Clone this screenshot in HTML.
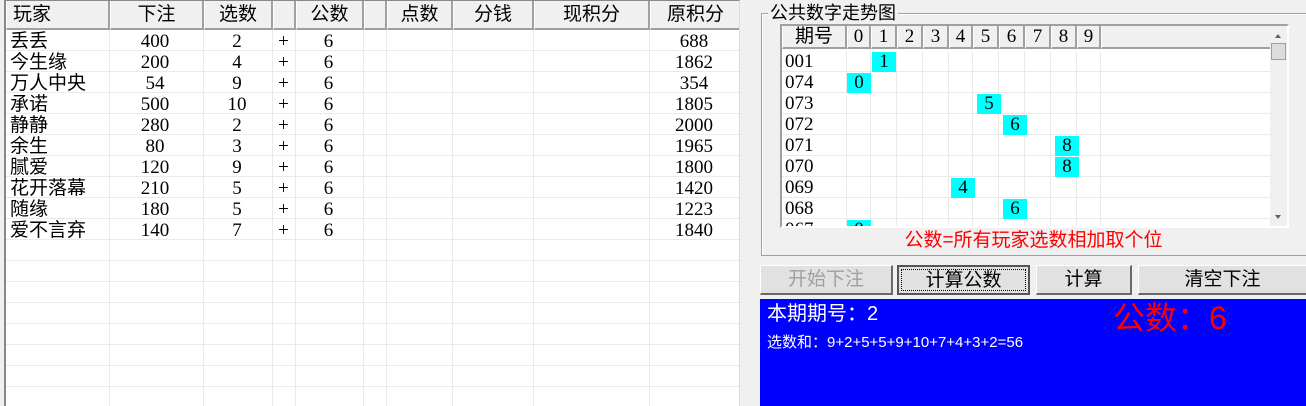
<!DOCTYPE html>
<html><head><meta charset="utf-8">
<style>
*{margin:0;padding:0;box-sizing:border-box}
body{width:1306px;height:406px;overflow:hidden;background:#f0f0f0;position:relative;font-family:"Liberation Serif","Noto Serif CJK SC",serif;color:#000}
.a{position:absolute}
.cn{font-family:"Liberation Sans","Noto Sans CJK SC",sans-serif}
#lv{left:4px;top:0;width:736px;height:406px;background:#fff;border-left:2px solid #888;border-top:1px solid #888;border-right:1px solid #ddd;overflow:hidden}
.hd{position:absolute;top:0;height:29px;background:#f0f0f0;border-right:2px solid #a0a0a0;border-bottom:2px solid #a0a0a0;border-left:1px solid #fff;font-size:19px;line-height:27px;text-align:center}
.vl{position:absolute;top:29px;bottom:0;width:1px;background:#eaeaea}
.grid{position:absolute;left:0;right:0;top:29px;bottom:0;background:repeating-linear-gradient(to bottom,transparent 0,transparent 20px,#eaeaea 20px,#eaeaea 21px)}
.r{position:absolute;height:21px;font-size:19px;line-height:21px;white-space:nowrap}
.c{position:absolute;text-align:center;white-space:nowrap}
.r .cn{font-size:19px}
#ch{left:780px;top:24px;width:509px;height:204px;background:#fff;border:2px solid #a0a0a0;border-right-color:#fff;border-bottom-color:#fff;overflow:hidden}
.ch{position:absolute;top:0;height:23px;background:#f0f0f0;border-right:2px solid #a0a0a0;border-bottom:2px solid #a0a0a0;border-left:1px solid #fff;font-size:19px;line-height:22px;text-align:center}
.cy{position:absolute;background:#00ffff;width:24px;height:20px;text-align:center;font-size:19px;line-height:20px}
.btn{position:absolute;top:265px;height:30px;background:#e1e1e1;border:1px solid #fff;border-right:2px solid #696969;border-bottom:2px solid #696969;font-size:19px;text-align:center;line-height:27px}
</style></head><body>
<div id="lv" class="a">
<div class="grid"></div>
<div class="vl" style="left:103px"></div><div class="vl" style="left:197px"></div><div class="vl" style="left:266px"></div><div class="vl" style="left:289px"></div><div class="vl" style="left:357px"></div><div class="vl" style="left:380px"></div><div class="vl" style="left:446px"></div><div class="vl" style="left:527px"></div><div class="vl" style="left:643px"></div>
<div class="hd cn" style="left:0;width:104px;text-align:left;padding-left:6px">玩家</div>
<div class="hd cn" style="left:104px;width:94px">下注</div>
<div class="hd cn" style="left:198px;width:69px">选数</div>
<div class="hd" style="left:267px;width:23px"></div>
<div class="hd cn" style="left:290px;width:68px">公数</div>
<div class="hd" style="left:358px;width:23px"></div>
<div class="hd cn" style="left:381px;width:66px">点数</div>
<div class="hd cn" style="left:447px;width:81px">分钱</div>
<div class="hd cn" style="left:528px;width:116px">现积分</div>
<div class="hd cn" style="left:644px;width:92px">原积分</div>
</div>
<div class="a" style="left:0;top:31px;width:740px">
<div class="r" style="top:0"><span class="c cn" style="left:10px">丢丢</span><span class="c" style="left:108px;width:94px">400</span><span class="c" style="left:202px;width:70px">2</span><span class="c" style="left:272px;width:23px">+</span><span class="c" style="left:295px;width:67px">6</span><span class="c" style="left:649px;width:90px">688</span></div>
<div class="r" style="top:21px"><span class="c cn" style="left:10px">今生缘</span><span class="c" style="left:108px;width:94px">200</span><span class="c" style="left:202px;width:70px">4</span><span class="c" style="left:272px;width:23px">+</span><span class="c" style="left:295px;width:67px">6</span><span class="c" style="left:649px;width:90px">1862</span></div>
<div class="r" style="top:42px"><span class="c cn" style="left:10px">万人中央</span><span class="c" style="left:108px;width:94px">54</span><span class="c" style="left:202px;width:70px">9</span><span class="c" style="left:272px;width:23px">+</span><span class="c" style="left:295px;width:67px">6</span><span class="c" style="left:649px;width:90px">354</span></div>
<div class="r" style="top:63px"><span class="c cn" style="left:10px">承诺</span><span class="c" style="left:108px;width:94px">500</span><span class="c" style="left:202px;width:70px">10</span><span class="c" style="left:272px;width:23px">+</span><span class="c" style="left:295px;width:67px">6</span><span class="c" style="left:649px;width:90px">1805</span></div>
<div class="r" style="top:84px"><span class="c cn" style="left:10px">静静</span><span class="c" style="left:108px;width:94px">280</span><span class="c" style="left:202px;width:70px">2</span><span class="c" style="left:272px;width:23px">+</span><span class="c" style="left:295px;width:67px">6</span><span class="c" style="left:649px;width:90px">2000</span></div>
<div class="r" style="top:105px"><span class="c cn" style="left:10px">余生</span><span class="c" style="left:108px;width:94px">80</span><span class="c" style="left:202px;width:70px">3</span><span class="c" style="left:272px;width:23px">+</span><span class="c" style="left:295px;width:67px">6</span><span class="c" style="left:649px;width:90px">1965</span></div>
<div class="r" style="top:126px"><span class="c cn" style="left:10px">腻爱</span><span class="c" style="left:108px;width:94px">120</span><span class="c" style="left:202px;width:70px">9</span><span class="c" style="left:272px;width:23px">+</span><span class="c" style="left:295px;width:67px">6</span><span class="c" style="left:649px;width:90px">1800</span></div>
<div class="r" style="top:147px"><span class="c cn" style="left:10px">花开落幕</span><span class="c" style="left:108px;width:94px">210</span><span class="c" style="left:202px;width:70px">5</span><span class="c" style="left:272px;width:23px">+</span><span class="c" style="left:295px;width:67px">6</span><span class="c" style="left:649px;width:90px">1420</span></div>
<div class="r" style="top:168px"><span class="c cn" style="left:10px">随缘</span><span class="c" style="left:108px;width:94px">180</span><span class="c" style="left:202px;width:70px">5</span><span class="c" style="left:272px;width:23px">+</span><span class="c" style="left:295px;width:67px">6</span><span class="c" style="left:649px;width:90px">1223</span></div>
<div class="r" style="top:189px"><span class="c cn" style="left:10px">爱不言弃</span><span class="c" style="left:108px;width:94px">140</span><span class="c" style="left:202px;width:70px">7</span><span class="c" style="left:272px;width:23px">+</span><span class="c" style="left:295px;width:67px">6</span><span class="c" style="left:649px;width:90px">1840</span></div>
</div>

<div class="a" style="left:761px;top:13px;width:545px;height:243px;border:1px solid #a0a0a0;border-right:none;box-shadow:inset 1px 1px 0 #fff"></div>
<div class="a cn" style="left:768px;top:2px;background:#f0f0f0;padding:0 2px;font-size:18px;line-height:22px">公共数字走势图</div>

<div id="ch" class="a">
<div class="grid" style="top:25px"></div>
<div class="vl" style="left:64px;top:25px"></div><div class="vl" style="left:88px;top:25px"></div><div class="vl" style="left:114px;top:25px"></div><div class="vl" style="left:140px;top:25px"></div><div class="vl" style="left:166px;top:25px"></div><div class="vl" style="left:190px;top:25px"></div><div class="vl" style="left:216px;top:25px"></div><div class="vl" style="left:242px;top:25px"></div><div class="vl" style="left:268px;top:25px"></div><div class="vl" style="left:294px;top:25px"></div><div class="vl" style="left:318px;top:25px"></div>
<div class="ch cn" style="left:0;width:65px">期号</div>
<div class="ch" style="left:65px;width:24px">0</div><div class="ch" style="left:89px;width:26px">1</div><div class="ch" style="left:115px;width:26px">2</div><div class="ch" style="left:141px;width:26px">3</div><div class="ch" style="left:167px;width:24px">4</div><div class="ch" style="left:191px;width:26px">5</div><div class="ch" style="left:217px;width:26px">6</div><div class="ch" style="left:243px;width:26px">7</div><div class="ch" style="left:269px;width:26px">8</div><div class="ch" style="left:295px;width:24px">9</div>
<div class="ch" style="left:319px;width:170px;border-right:none"></div>
<div class="a" style="left:3px;top:25px;font-size:19px;line-height:21px">001<br>074<br>073<br>072<br>071<br>070<br>069<br>068<br>067</div>
<div class="cy" style="left:90px;top:26px">1</div>
<div class="cy" style="left:65px;top:47px">0</div>
<div class="cy" style="left:195px;top:68px">5</div>
<div class="cy" style="left:221px;top:89px">6</div>
<div class="cy" style="left:273px;top:110px">8</div>
<div class="cy" style="left:273px;top:131px">8</div>
<div class="cy" style="left:169px;top:152px">4</div>
<div class="cy" style="left:221px;top:173px">6</div>
<div class="cy" style="left:65px;top:194px">0</div>
<div class="a" style="left:488px;top:0;width:17px;height:202px;background:#f0f0f0">
<div class="a" style="left:5px;top:8px;width:0;height:0;border:3px solid transparent;border-bottom:4px solid #606060;border-top:none"></div>
<div class="a" style="left:1px;top:17px;width:15px;height:17px;background:#dcdcdc;border:1px solid #a0a0a0"></div>
<div class="a" style="left:5px;top:189px;width:0;height:0;border:3px solid transparent;border-top:4px solid #606060;border-bottom:none"></div>
</div>
</div>
<div class="a cn" style="left:761px;top:230px;width:545px;text-align:center;color:#ff0000;font-size:19px;line-height:22px">公数=所有玩家选数相加取个位</div>

<div class="btn cn" style="left:760px;width:133px;color:#a0a0a0">开始下注</div>
<div class="btn cn" style="left:897px;width:133px;border:2px solid #555;outline:1px dotted #000;outline-offset:-5px">计算公数</div>
<div class="btn cn" style="left:1036px;width:96px">计算</div>
<div class="btn cn" style="left:1138px;width:170px">清空下注</div>

<div class="a" style="left:760px;top:299px;width:546px;height:107px;background:#0000ff">
<div class="a cn" style="left:7px;top:1px;color:#fff;font-size:20px;line-height:28px">本期期号：2</div>
<div class="a cn" style="left:7px;top:33px;color:#fff;font-size:15px;line-height:22px">选数和：9+2+5+5+9+10+7+4+3+2=56</div>
<div class="a cn" style="left:353px;top:0px;color:#ff0000;font-size:32px;line-height:38px">公数：6</div>
</div>
</body></html>
